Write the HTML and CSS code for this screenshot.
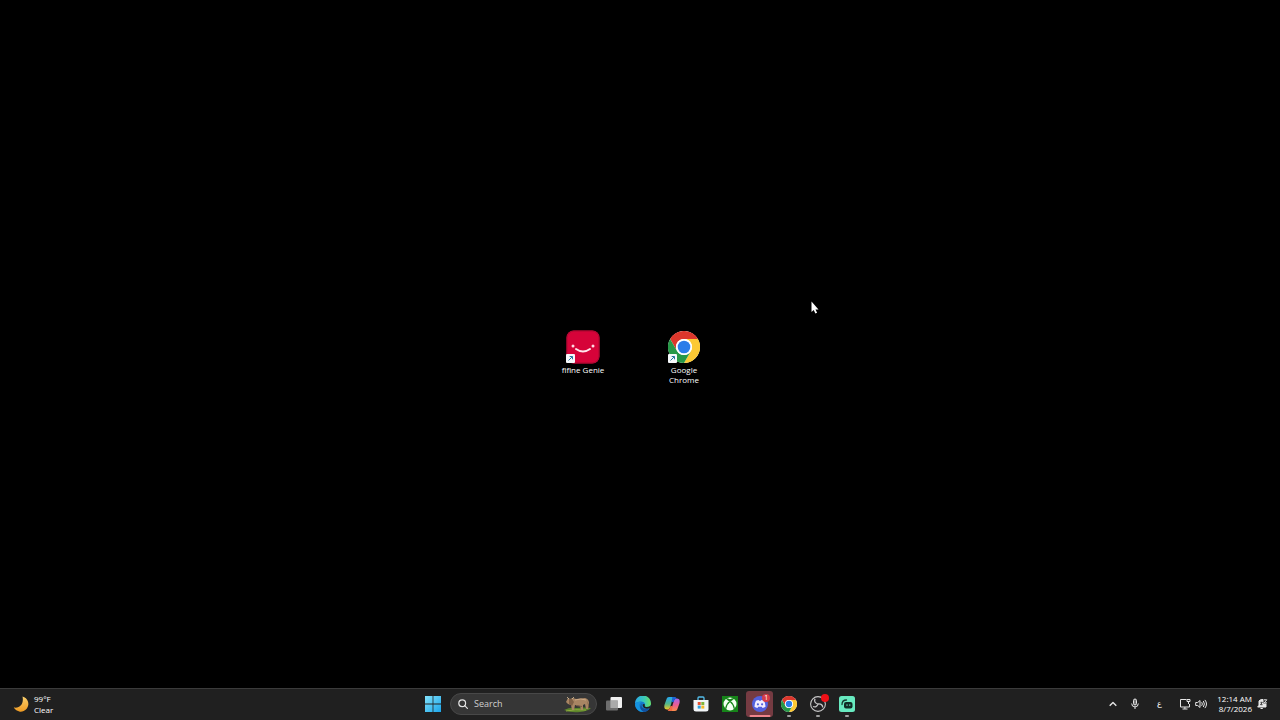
FILE: index.html
```html
<!DOCTYPE html>
<html lang="en">
<head>
<meta charset="utf-8">
<title>Desktop</title>
<link rel="stylesheet" href="styles.css">
</head>
<body>
<svg class="defs" aria-hidden="true">
  <defs>
    <linearGradient id="moon" x1="0" y1="0" x2="0" y2="1"><stop offset="0" stop-color="#f9cf6c"/><stop offset="1" stop-color="#ee9a22"/></linearGradient>
    <linearGradient id="win" x1="0" y1="0" x2="1" y2="1"><stop offset="0" stop-color="#82e2fb"/><stop offset="1" stop-color="#1ba5ea"/></linearGradient>
    <linearGradient id="edgeTop" x1="0" y1="0" x2="1" y2="0"><stop offset="0" stop-color="#2aa8e8"/><stop offset=".6" stop-color="#3ccbb5"/><stop offset="1" stop-color="#6fe05a"/></linearGradient>
    <linearGradient id="copA" x1="0" y1="0" x2="0" y2="1"><stop offset="0" stop-color="#25a7f2"/><stop offset=".55" stop-color="#52b788"/><stop offset="1" stop-color="#f2c624"/></linearGradient>
    <linearGradient id="copB" x1="0" y1="0" x2="0" y2="1"><stop offset="0" stop-color="#a566ee"/><stop offset=".5" stop-color="#ea5c94"/><stop offset="1" stop-color="#fb8d48"/></linearGradient>
    <symbol id="chrome" viewBox="0 0 48 48">
      <circle cx="24" cy="24" r="24" fill="#fff"/>
      <path fill="#dc372c" d="M24 12h20.8A24 24 0 0 0 3.2 12l10.4 18A12 12 0 0 1 24 12z"/>
      <path fill="#fcc934" d="M34.4 30 24 48A24 24 0 0 0 44.8 12H24a12 12 0 0 1 10.400 18z"/>
      <path fill="#279847" d="M13.600 30 3.200 12A24 24 0 0 0 24 48l10.400-18a12 12 0 0 1-20.800 0z"/>
      <circle cx="24" cy="24" r="12" fill="#fff"/>
      <circle cx="24" cy="24" r="9.500" fill="#2b7de9"/>
    </symbol>
    <symbol id="shortcut" viewBox="0 0 9 9">
      <rect width="9" height="9" rx="1" fill="#f5f8fb"/>
      <path d="M2.500 6.500 6.300 2.700M3.700 2.500h2.800v2.800" fill="none" stroke="#27759c" stroke-width="1"/>
    </symbol>
  </defs>
</svg>

<main class="desktop">
  <a class="shortcut shortcut-genie" href="#genie">
    <svg class="shortcut-icon" viewBox="0 0 34 34" aria-hidden="true">
      <rect x=".5" y=".5" width="33" height="33" rx="7" fill="#d60339"/>
      <rect x="1" y="1" width="32" height="32" rx="7" fill="none" stroke="#a90931"/>
      <circle cx="7" cy="16" r="1.500" fill="#ffd9e2"/><circle cx="27" cy="16" r="1.500" fill="#ffd9e2"/>
      <path d="M10 19q7 5 14 0" fill="none" stroke="#ffe6ec" stroke-width="2" stroke-linecap="round"/>
      <use href="#shortcut" x="0" y="24" width="9" height="9"/>
    </svg>
    <span class="shortcut-name">fifine Genie</span>
  </a>
  <a class="shortcut shortcut-chrome" href="#chrome-app">
    <svg class="shortcut-icon" viewBox="0 0 34 34" aria-hidden="true">
      <use href="#chrome" x="1" y="1" width="32" height="32"/>
      <use href="#shortcut" x="1" y="24" width="9" height="9"/>
    </svg>
    <span class="shortcut-name">Google Chrome</span>
  </a>
  <svg class="cursor" viewBox="0 0 8 13" aria-hidden="true"><path d="M.5.500v10.500l2.200-2 1.700 3.500 1.700-.8-1.600-3.300h3z" fill="#fff"/></svg>
</main>

<footer class="taskbar">
  <button class="weather" type="button">
    <svg class="moon" viewBox="0 0 16 16" aria-hidden="true"><path d="M9.500.500A7.700 7.700 0 1 1 .8 11.500C7.500 12.500 11 7.500 9.500.500z" fill="url(#moon)"/></svg>
    <span class="lines"><span>99°F</span><span>Clear</span></span>
  </button>

  <nav class="center" aria-label="Taskbar">
    <button class="start" type="button" aria-label="Start">
      <svg class="icon" viewBox="0 0 16 16"><path fill="url(#win)" d="M0 0h7.600v7.600H0zM8.400 0H16v7.600H8.400zM0 8.400h7.600V16H0zM8.400 8.400H16V16H8.400z"/></svg>
    </button>
    <label class="search">
      <svg class="search-icon" viewBox="0 0 10 10" aria-hidden="true"><circle cx="4.200" cy="4.200" r="3.400" fill="none" stroke="#e4e4e4" stroke-width="1.200"/><path d="m6.700 6.700 2.700 2.700" stroke="#e4e4e4" stroke-width="1.200" stroke-linecap="round"/></svg>
      <input class="search-input" type="text" placeholder="Search" aria-label="Search">
      <svg class="animal" viewBox="0 0 30 18" aria-hidden="true">
        <path d="M1 15q6-3 12-2 8-1 15 0-3 3-11 4-9 1-16-2z" fill="#5d852b"/>
        <path d="M3 16q9-2 20-1" stroke="#8fac3d" fill="none"/>
        <path d="M5 3l2 1 3-1 3 1 9-1q4 1 4 5l-1 6h-2l-1-5-2 1v5h-2l-1-4-5-1-1 5h-2l-1-5q-3 0-5-3z" fill="#a98563"/>
        <path d="M6 4l3 0 2 3-2 4-3-2zM13 10l6 1v1l-6-1zM24 6l2 4v4z" fill="#806046"/>
        <path d="M12 5q6-2 11 0" stroke="#cba985" fill="none"/>
        <path d="M4 2l2 2M11 2 9 4" stroke="#d8c09a" stroke-width=".8"/>
      </svg>
    </label>
    <div class="apps">
      <button class="app" type="button" aria-label="Task view">
        <svg class="icon" viewBox="0 0 16 16"><rect x="4.500" y="1" width="11.500" height="11" rx="1" fill="#f0f0f0"/><rect x="0" y="4.500" width="12" height="10" rx="1" fill="#777" fill-opacity=".88"/><path d="M4.500 4.500H12V12H4.500z" fill="#aaa"/></svg>
      </button>
      <button class="app" type="button" aria-label="Edge">
        <svg class="icon" viewBox="0 0 16 16"><circle cx="8" cy="8" r="8" fill="#167acb"/><path d="M0 7.500A8 8 0 0 1 16 7.500C16 11 13 12 10.500 11.400 9 11 9 10.300 9.800 9.500 11 7.500 8.500 5.500 6 5.500 3 5.500 1 6.500 0 7.500z" fill="url(#edgeTop)"/><path d="M5.500 6.500C2.800 9.500 5 14 9 15.900 4.500 16.500.5 13 0 8.500 1 6 4 5.500 6.500 6z" fill="#1593df"/><path d="M7 7.500c-2 3 1.500 7 7.600 5A8 8 0 0 1 9 15.900C5 14.500 4 10 7 7.500z" fill="#124f9f"/><path d="M8 8c-1 2 .5 4.700 4 4.700 2 0 3-.7 3.500-1.200l.5-2.500c-1 1.500-3.500 2.500-5.500 1.800C9 10.200 10 9.500 10 8.500z" fill="#202020"/></svg>
      </button>
      <button class="app" type="button" aria-label="Copilot">
        <svg class="icon" viewBox="0 0 16 16"><path d="M5 1h5.500C9 1.500 8.500 3 8 5L6 11.500C5.500 13 4.500 13.500 3 13.500 0 13.500 0 10.500.6 8.500L2.400 3.500C3 1.700 3.700 1 5 1z" fill="url(#copA)"/><path d="M11 15H5.500C7 14.500 7.500 13 8 11l2-6.500C10.500 3 11.500 2.500 13 2.500c3 0 3 3 2.400 5l-1.800 5C13 14.300 12.300 15 11 15z" fill="url(#copB)"/><path d="M8 1h2.500c1.200 0 1.800.6 2.200 1.700-1.400 0-2.200.8-2.700 2.300L9.700 6H7.500L8 4c.3-1.500.5-2.200 0-3z" fill="#1c63d5"/><path d="M8 15H5.500c-1.200 0-1.700-.5-2-1.500 1.500 0 2-.6 2.500-2l.5-1.500h2z" fill="#f06c43"/></svg>
      </button>
      <button class="app" type="button" aria-label="Microsoft Store">
        <svg class="icon" viewBox="0 0 16 16"><path d="M5 4V2q0-1 1-1h4q1 0 1 1v2" fill="none" stroke="#53bce9" stroke-width="1.300"/><path d="M.5 4h15v9q0 2.500-2.500 2.500H3Q.5 15.500.500 13z" fill="#f2f5f7"/><path d="M4.700 6h3v3h-3z" fill="#e65232"/><path d="M8.300 6h3v3h-3z" fill="#80b53b"/><path d="M4.700 9.600h3v3h-3z" fill="#2e9fde"/><path d="M8.300 9.600h3v3h-3z" fill="#f5b928"/></svg>
      </button>
      <button class="app" type="button" aria-label="Xbox">
        <svg class="icon" viewBox="0 0 16 16"><path d="M0 0h16v16H0z" fill="#168419"/><circle cx="8" cy="8" r="6.500" fill="#f4fff2"/><path d="M4 2.700Q6 2.600 8 4.100q2-1.500 4-1.400M8 5.300Q4.500 8 3.600 12.800M8 5.300q3.500 2.700 4.400 7.500M8 5.300 5 3M8 5.300 11 3" fill="none" stroke="#168419" stroke-width="1.300"/></svg>
      </button>
      <button class="app app-alert" type="button" aria-label="Discord">
        <svg class="icon" viewBox="0 0 16 16"><circle cx="8" cy="8" r="8" fill="#5360dd"/><path d="M4 4.700q1.500-.8 2.700-.8l.4.800h1.800l.4-.8q1.200 0 2.700.8 1.600 2.700 1.500 6-1.300 1-3 1.200l-.7-1.200H6.200l-.7 1.200q-1.700-.2-3-1.200-.1-3.300 1.500-6z" fill="#f2edff"/><circle cx="5.900" cy="8.300" r="1.100" fill="#5360dd"/><circle cx="10.100" cy="8.300" r="1.100" fill="#5360dd"/></svg>
        <span class="badge">1</span>
      </button>
      <button class="app app-running" type="button" aria-label="Google Chrome">
        <svg class="icon"><use href="#chrome" width="16" height="16"/></svg>
      </button>
      <button class="app app-running" type="button" aria-label="OBS Studio">
        <svg class="icon" viewBox="0 0 16 16"><circle cx="8" cy="8" r="7.400" fill="#211f22" stroke="#c8c8c8" stroke-width="1.100"/><path d="M7.800 8Q3.500 6.500 5 2.800M8 8q4.500-.5 4.800 3.500M8 8Q6.500 12 3 10.500" fill="none" stroke="#c4c4c4" stroke-width="1.300"/></svg>
        <span class="record"></span>
      </button>
      <button class="app app-running" type="button" aria-label="Streamlabs">
        <svg class="icon" viewBox="0 0 16 16"><rect width="16" height="16" rx="2.500" fill="#68eac0"/><path d="M3 8.500Q3 4 7.500 4" fill="none" stroke="#163c31" stroke-width="1.300" stroke-linecap="round"/><rect x="5" y="6" width="8.500" height="6.500" rx="2" fill="#102c25"/><path d="M8 8.300v1.600M10.800 8.300v1.600" stroke="#68eac0" stroke-width="1"/></svg>
      </button>
    </div>
  </nav>

  <div class="tray">
    <button class="tray-button" type="button" aria-label="Show hidden icons"><svg class="tray-icon" viewBox="0 0 12 12"><path d="m2.700 7.800 3.300-3.300 3.300 3.300" stroke-width="1.400"/></svg></button>
    <button class="tray-button microphone" type="button" aria-label="Microphone"><svg class="tray-icon" viewBox="0 0 12 12"><rect x="4.500" y="1" width="3" height="6" rx="1.500" fill="#777"/><path d="M2.700 5.500q0 3.400 3.300 3.400t3.300-3.400M6 9v2"/></svg></button>
    <button class="tray-button language" type="button" aria-label="Arabic keyboard">ع</button>
    <button class="tray-button sound" type="button" aria-label="Network and volume">
      <svg class="tray-icon" viewBox="0 0 12 12"><path d="M7.500 1.500h-6v7.500h9V6M3.500 11h5M5.900 9v2"/><path d="M8 1.500h3v2H8zM9.500 3.500V6"/></svg>
      <svg class="tray-icon" viewBox="0 0 12 12"><path d="M.7 4.500v3h2L5 9.500v-7L2.700 4.500zM6.700 4.200q1.300 1.800 0 3.600M8.300 3q2.200 3 0 6M9.900 1.900q3.200 4.100 0 8.200"/></svg>
    </button>
    <button class="clock" type="button"><span>12:14 AM</span><span>8/7/2026</span></button>
    <button class="bell" type="button" aria-label="Notifications"><svg class="tray-icon" viewBox="0 0 12 12"><path d="M3 3q1-1.500 3-1.500h1V6h3v3H1.700L3 7.200z" fill="#e8e8e8"/><path d="M4.500 10.500h2.300M7.800 1.800h3L8.200 4.900H11"/><path d="M4.500 4.300h1.800L4.500 6.700h2" stroke="#333"/></svg></button>
  </div>
</footer>
</body>
</html>
```
FILE: styles.css
```css
* { box-sizing: border-box; }

body {
  display: flex;
  flex-direction: column;
  min-height: 100vh;
  margin: 0;
  background: #000;
  color: #fff;
  font-family: "Open Sans", "Noto Sans", sans-serif;
  font-size: 8px;
  font-weight: 500;
  line-height: 10px;
}

button {
  margin: 0;
  padding: 0;
  border: 0;
  background: none;
  color: inherit;
  font: inherit;
}

svg { display: block; flex: none; }

.defs { position: absolute; width: 0; height: 0; }

.desktop { position: relative; flex: 1; }

.shortcut {
  position: absolute;
  top: 330px;
  display: flex;
  flex-direction: column;
  align-items: center;
  gap: 1px;
  width: 50px;
  color: #fff;
  text-align: center;
  text-decoration: none;
}

.shortcut-genie { left: 558px; }
.shortcut-chrome { left: 659px; }
.shortcut-icon { width: 34px; height: 34px; }

.cursor {
  position: absolute;
  top: 301px;
  left: 811px;
  width: 8px;
  height: 13px;
}

.taskbar {
  display: grid;
  grid-template-columns: 1fr auto 1fr;
  align-items: center;
  height: 32px;
  padding-bottom: 2px;
  border-top: 1px solid #3b3b3b;
  background: #202020;
}

.weather {
  display: flex;
  align-items: center;
  justify-self: start;
  gap: 5px;
  padding-left: 13px;
  text-align: left;
}

.moon { width: 16px; height: 16px; }

.lines, .clock { display: flex; flex-direction: column; }
.lines { line-height: 11px; }

.center { display: flex; align-items: center; gap: 2px; }

.start { display: grid; place-items: center; width: 30px; height: 26px; }

.icon { width: 16px; height: 16px; }

.search {
  display: flex;
  align-items: center;
  gap: 6px;
  width: 147px;
  height: 22px;
  padding: 0 3px 0 7px;
  border: 1px solid #484848;
  border-radius: 11px;
  background: #363636;
}

.search-icon { width: 10px; height: 10px; }

.search-input {
  flex: 1;
  min-width: 0;
  padding: 0;
  border: 0;
  outline: 0;
  background: none;
  color: #fff;
  font: 9px/12px "Open Sans", "Noto Sans", sans-serif;
}

.search-input::placeholder { color: #cfcfcf; opacity: 1; }

.animal { width: 30px; height: 18px; }

.apps { display: grid; grid-template-columns: repeat(9, 1fr); width: 263px; }

.app {
  position: relative;
  display: grid;
  place-items: center;
  height: 26px;
  margin: 0 1px;
  border-radius: 3px;
}

.app-alert { background: #753b42; }

.app-alert::after, .app-running::after {
  content: "";
  position: absolute;
  bottom: 0;
  left: 50%;
  width: 4px;
  height: 2px;
  border-radius: 1px;
  background: #a0a0a0;
  transform: translateX(-50%);
}

.app-alert::after { width: 21px; background: #ef858b; }

.badge, .record {
  position: absolute;
  top: 3px;
  right: 3px;
  width: 8px;
  height: 8px;
  border-radius: 50%;
  background: #d73c46;
  color: #fff;
  font-size: 7px;
  line-height: 8px;
  text-align: center;
}

.record { background: #f01017; }

.tray {
  display: flex;
  align-items: center;
  justify-self: end;
  padding-right: 12px;
}

.tray-button { display: grid; place-items: center; width: 24px; height: 26px; }

.microphone { width: 20px; }

.tray-icon {
  width: 12px;
  height: 12px;
  fill: none;
  stroke: #e6e6e6;
  stroke-width: 1;
  stroke-linejoin: round;
}

.language { width: 28px; font-family: "DejaVu Sans", sans-serif; }

.sound { display: flex; justify-content: center; gap: 4px; width: 40px; }

.clock { align-items: flex-end; padding-left: 4px; text-align: right; }

.bell { padding-left: 4px; }
```
